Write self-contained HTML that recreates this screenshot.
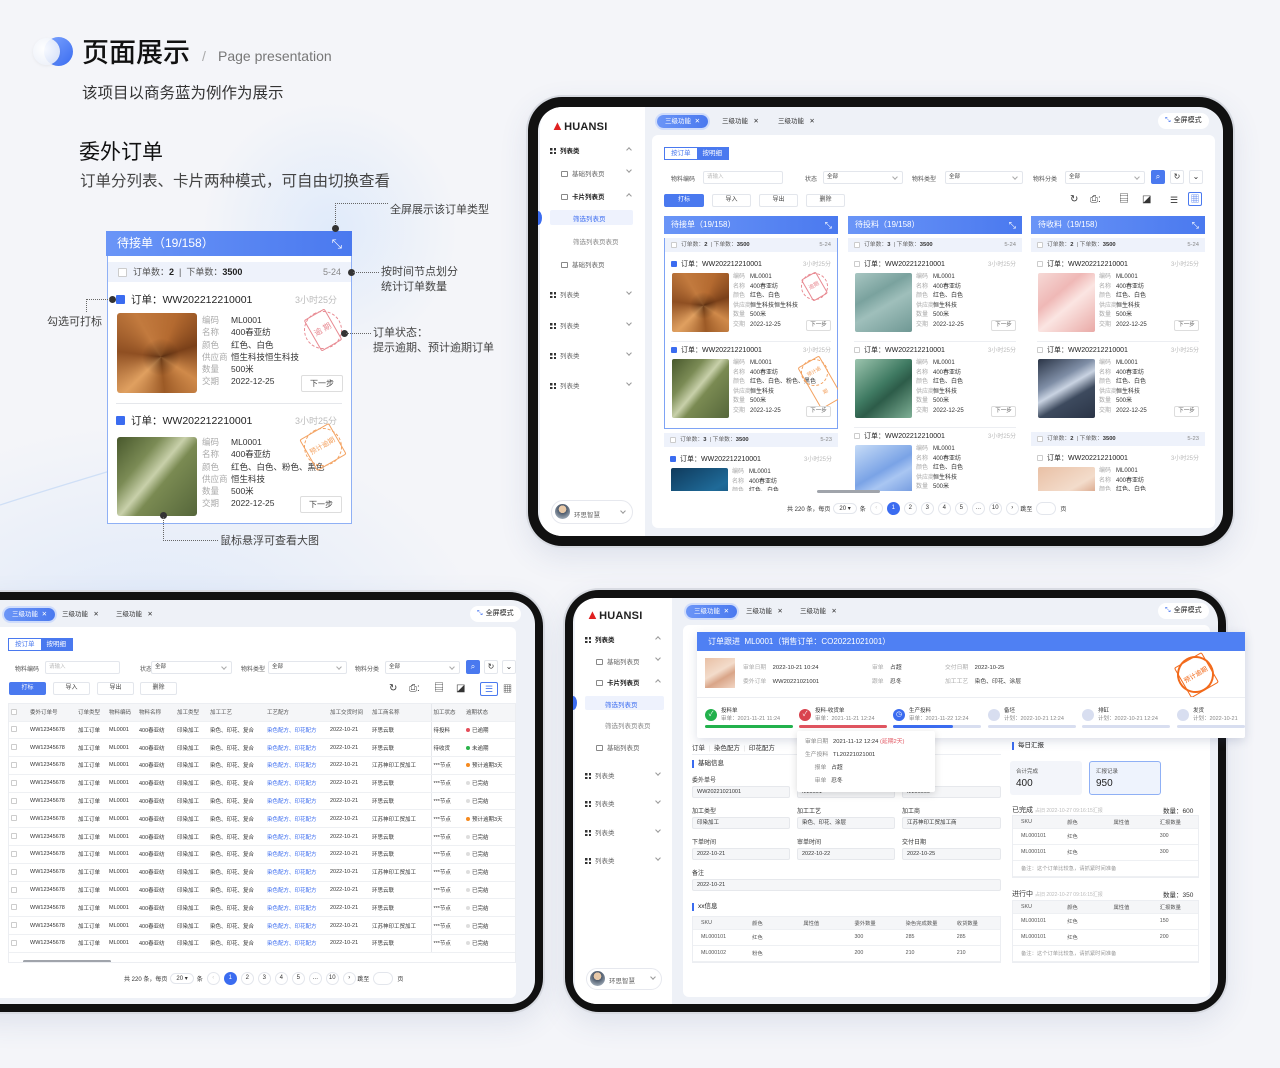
<!DOCTYPE html>
<html><head><meta charset="utf-8">
<style>
*{box-sizing:border-box;margin:0;padding:0}
body{width:1280px;height:1068px;overflow:hidden;position:relative;background:#f4f5f9;font-family:"Liberation Sans","Noto Sans CJK SC",sans-serif;color:#333}
.a{position:absolute}
.bg1{position:absolute;left:-200px;top:420px;width:700px;height:500px;border-radius:50%;background:radial-gradient(ellipse at center,rgba(200,220,250,.55),rgba(244,245,249,0) 70%)}
.bg2{position:absolute;left:200px;top:100px;width:260px;height:260px;border-radius:50%;background:radial-gradient(circle,rgba(215,230,250,.7),rgba(244,245,249,0) 70%)}
.frame{position:absolute;background:#111;box-shadow:0 0 0 2px #d8dbe2,0 10px 30px rgba(60,80,130,.12)}
.scr{position:absolute;background:#eef1f7;overflow:hidden}
.side{position:absolute;background:#fff;top:0;bottom:0}
.logo{position:absolute;font-weight:bold;font-size:11px;color:#222;letter-spacing:.2px}
.logo b{color:#e02020;font-size:13px}
.si{position:absolute;font-size:6.5px;color:#666;white-space:nowrap}
.si.h{color:#222;font-weight:bold}
.g{display:inline-block;width:6px;height:6px;vertical-align:-1px;margin-right:4px;background:linear-gradient(#333,#333) 0 0/2.5px 2.5px no-repeat,linear-gradient(#333,#333) 3.5px 0/2.5px 2.5px no-repeat,linear-gradient(#333,#333) 0 3.5px/2.5px 2.5px no-repeat,linear-gradient(#333,#333) 3.5px 3.5px/2.5px 2.5px no-repeat}
.pg{display:inline-block;width:7px;height:6px;border:1px solid #888;border-radius:1px;vertical-align:-1px;margin-right:4px}
.chev{position:absolute;width:4px;height:4px;border-right:1px solid #999;border-bottom:1px solid #999;transform:rotate(45deg)}
.chev.up{transform:rotate(-135deg)}
.tab{position:absolute;font-size:6.5px;color:#333;height:13px;line-height:13px;white-space:nowrap}
.tab.on{background:linear-gradient(90deg,#6b95f7,#4a79ef);color:#fff;border-radius:7px;padding:0 8px;box-shadow:0 0 0 2px #cfdcfb}
.fs{position:absolute;background:#fff;border-radius:9px;font-size:7px;height:16px;line-height:16px;padding:0 7px;color:#222}
.fs i{color:#3b6cf0;font-style:normal;margin-right:3px}
.panel{position:absolute;background:#fff;border-radius:6px}
.tg{position:absolute;display:flex;border:1px solid #4a79ef;font-size:6.5px;height:13px;line-height:11px}
.tg span{padding:0 6px;color:#4a79ef}
.tg span.on{background:#4a79ef;color:#fff}
.lb{position:absolute;font-size:6px;color:#555;white-space:nowrap}
.in{position:absolute;height:13px;border:1px solid #e3e6ec;border-radius:2px;font-size:5.5px;color:#bbb;line-height:11px;padding-left:3px}
.in.s{color:#444}
.in.s:after{content:"";position:absolute;right:5px;top:3px;width:3px;height:3px;border-right:1px solid #aaa;border-bottom:1px solid #aaa;transform:rotate(45deg)}
.ib{position:absolute;width:14px;height:14px;border:1px solid #e3e6ec;border-radius:2px;font-size:8px;text-align:center;line-height:12px;color:#333}
.ib.b{background:#4a79ef;border-color:#4a79ef;color:#fff}
.bt{position:absolute;height:13px;border:1px solid #e3e6ec;border-radius:2px;font-size:6px;text-align:center;line-height:11px;color:#444}
.bt.b{background:#4a79ef;border-color:#4a79ef;color:#fff}
.ico{position:absolute;font-size:10px;color:#333;line-height:10px}
.pgn{position:absolute;display:flex;align-items:center;font-size:6px;color:#333;white-space:nowrap}
.pgn .c{width:13px;height:13px;border-radius:50%;border:1px solid #e3e6ec;text-align:center;line-height:11px;margin-left:4px;background:#fff}
.pgn .c.on{background:#3b6cf0;border-color:#3b6cf0;color:#fff}
.pgn .sel{border:1px solid #e3e6ec;border-radius:7px;padding:1px 5px;margin:0 3px}
.pgn .jp{width:20px;height:13px;border:1px solid #e3e6ec;border-radius:7px;margin:0 4px}
.col{position:absolute;top:81px;width:174px;height:275px;overflow:hidden}
.ch{height:18px;background:linear-gradient(90deg,#6a95f7,#4a79ef);color:#fff;font-size:8px;line-height:18px;padding-left:7px;position:relative}
.ch:after{content:"⤡";position:absolute;right:6px;top:0;font-size:9px}
.box{margin-top:4px}
.box.sel{border:1px solid #7ea3f5;border-top:none}
.sum{height:14px;background:#eef2fb;font-size:5.8px;line-height:14px;padding:0 6px;color:#666;display:flex;align-items:center;white-space:nowrap}
.sum b{color:#333;margin-right:3px}
.sum span.r{margin-left:auto;color:#888}
.cb{display:inline-block;width:6px;height:6px;border:1px solid #ccc;border-radius:1px;margin-right:4px;vertical-align:-1px;background:#fff;flex:none}
.cb.on{background:#3b6cf0;border-color:#3b6cf0}
.ord{height:86px;position:relative;margin:0 6px;border-bottom:1px solid #eceef2}
.ord.last{border-bottom:none}
.ot{position:absolute;left:0;top:3px;font-size:7px;color:#222;line-height:12px;white-space:nowrap}
.otm{position:absolute;right:0;top:3px;font-size:6px;color:#bbb;line-height:12px}
.img{position:absolute;left:1px;top:17px;width:57px;height:59px;border-radius:2px}
.inf{position:absolute;left:62px;top:17px;font-size:6px;line-height:9.6px;white-space:nowrap}
.inf span{color:#aaa;display:inline-block;width:17px}
.nx{position:absolute;right:0;top:64px;width:25px;height:11px;border:1px solid #ddd;border-radius:2px;font-size:5.5px;text-align:center;line-height:9px;color:#555;background:#fff}
.stamp{position:absolute;border-radius:50%;border:1.5px dashed;text-align:center;transform:rotate(-30deg)}
.stamp b{display:inline-block;border:1px solid;border-radius:2px;font-weight:normal;padding:0 2px}
.red{color:#e88a92;border-color:#e88a92}
.org{color:#f3a261;border-color:#f3a261}
.f1{background:radial-gradient(circle at 55% 55%,rgba(60,30,10,.55) 0,rgba(60,30,10,0) 30%),conic-gradient(from 20deg at 55% 55%,#b46a30,#7a4019,#d08a4a,#9c5a26,#e0a060,#8f4f22,#c27a3e,#b46a30)}
.f2{background:linear-gradient(130deg,#48582c 0,#7b8b55 30%,#c8d0aa 47%,#7a8a52 58%,#55663a 100%)}
.f3{background:linear-gradient(150deg,#a8c6c2 0,#7aa29e 35%,#9fbfbb 55%,#6f9894 100%)}
.f4{background:linear-gradient(140deg,#9cc4ae 0,#3f7a62 45%,#2d5c49 60%,#7fb096 100%)}
.f5{background:linear-gradient(140deg,#f6d9d6 0,#efb8b6 35%,#fbe5e2 55%,#e9a9a6 100%)}
.f6{background:linear-gradient(150deg,#2a3446 0,#7f8ea6 35%,#c9d3e2 48%,#3d4a5e 65%,#2a3446 100%)}
.f7{background:linear-gradient(150deg,#0f3a5c,#1f6a98 50%,#0f3a5c)}
.f8{background:linear-gradient(150deg,#c7dcf7,#7aa3e6 45%,#a9c6f2 60%,#5d88d8)}
.f9{background:linear-gradient(150deg,#e9c0a5,#f3dccb 45%,#d9a588 65%,#f2d6c4)}
table{border-collapse:collapse;table-layout:fixed}
.tb td,.tb th{font-size:5.5px;white-space:nowrap;overflow:hidden;height:17.8px;border-bottom:1px solid #eef0f3;padding-left:2px;text-align:left;font-weight:normal;color:#333}
.tb th{background:#f5f6f8;height:17px;color:#555}
.tb td.bl{color:#3b6cf0}
.dot{display:inline-block;width:4px;height:4px;border-radius:50%;margin-right:2px;vertical-align:0}
.ann{position:absolute;font-size:11px;color:#444;white-space:nowrap;line-height:15px}
.dl{position:absolute;border-color:#666;border-style:dotted;border-width:0}
.dd{position:absolute;width:7px;height:7px;border-radius:50%;background:#333}
.fl{position:absolute;font-size:6px;color:#333;white-space:nowrap}
.fi{position:absolute;height:12px;background:#f5f6f8;border:1px solid #e6e8ec;border-radius:2px;font-size:5.5px;line-height:10px;padding-left:4px;color:#333}
.sec{position:absolute;font-size:6.5px;color:#222;border-left:2px solid #3b6cf0;padding-left:4px;line-height:8px}
.st{width:100%}
.st td{font-size:5.3px;color:#555;height:16px;border-bottom:1px solid #eef0f3;padding-left:8px}
.st tr:first-child td{background:#f5f6f8;height:12px}
</style></head><body>
<div class="bg1"></div><div class="bg2"></div>
<svg class="a" style="left:0;top:380px" width="360" height="160"><path d="M0 125 C40 112 80 100 120 88" stroke="#cfdff6" stroke-width="1.2" fill="none"/></svg>

<div class="a" style="left:44px;top:37px;width:29px;height:29px;border-radius:50%;background:linear-gradient(135deg,#7fa6ff,#3a6cf0)"></div>
<div class="a" style="left:33px;top:38px;width:27px;height:27px;border-radius:50%;background:radial-gradient(circle at 40% 40%,rgba(255,255,255,.95),rgba(230,236,248,.85));box-shadow:0 1px 3px rgba(0,0,0,.06)"></div>
<div class="a" style="left:82px;top:36px;font-size:27px;font-weight:500;color:#111;line-height:34px">页面展示</div>
<div class="a" style="left:202px;top:48px;font-size:14px;color:#aaa">/</div>
<div class="a" style="left:218px;top:48px;font-size:14px;color:#777">Page presentation</div>
<div class="a" style="left:82px;top:81px;font-size:15.5px;color:#333">该项目以商务蓝为例作为展示</div>
<div class="a" style="left:79px;top:136px;font-size:21px;color:#111">委外订单</div>
<div class="a" style="left:80px;top:169px;font-size:15.5px;color:#444">订单分列表、卡片两种模式，可自由切换查看</div>

<div class="a" style="left:106px;top:231px;width:246px;height:25px;background:linear-gradient(90deg,#6a95f7,#4a79ef);color:#fff;font-size:12px;line-height:25px;padding-left:11px">待接单（19/158）<span style="position:absolute;right:10px;font-size:13px">⤡</span></div>
<div class="a" style="left:107px;top:256px;width:245px;height:268px;border:1.5px solid #8fb0f5;background:#fff;border-top:none"></div>
<div class="a" style="left:108px;top:262px;width:243px;height:20px;background:#eef2fb;font-size:9px;line-height:20px;padding:0 10px;color:#555;display:flex;align-items:center;white-space:nowrap"><span class="cb" style="width:9px;height:9px;margin-right:6px"></span>订单数：<b style="color:#222">2</b>&nbsp;&nbsp;|&nbsp;&nbsp;下单数：<b style="color:#222">3500</b><span style="margin-left:auto;color:#888">5-24</span></div>
<div class="a" style="left:116px;top:292px;font-size:10.5px;color:#222;white-space:nowrap"><span class="cb on" style="width:9px;height:9px;margin-right:6px"></span>订单：WW202212210001</div>
<div class="a" style="left:295px;top:293px;font-size:9px;color:#bbb">3小时25分</div>
<div class="a f1" style="left:117px;top:313px;width:80px;height:80px;border-radius:3px"></div>
<div class="a" style="left:202px;top:314px;font-size:8.5px;line-height:12.3px;white-space:nowrap;color:#333"><span style="color:#aaa;display:inline-block;width:29px">编码</span>ML0001<br><span style="color:#aaa;display:inline-block;width:29px">名称</span>400春亚纺<br><span style="color:#aaa;display:inline-block;width:29px">颜色</span>红色、白色<br><span style="color:#aaa;display:inline-block;width:29px">供应商</span>恒生科技恒生科技<br><span style="color:#aaa;display:inline-block;width:29px">数量</span>500米<br><span style="color:#aaa;display:inline-block;width:29px">交期</span>2022-12-25</div>
<div class="stamp red" style="left:304px;top:311px;width:38px;height:38px;font-size:8px;line-height:34px"><b>逾 期</b></div>
<div class="a" style="left:301px;top:375px;width:42px;height:17px;border:1px solid #ddd;border-radius:2px;font-size:8px;text-align:center;line-height:15px;color:#444;background:#fff">下一步</div>
<div class="a" style="left:116px;top:403px;width:226px;height:1px;background:#e5e7eb"></div>
<div class="a" style="left:116px;top:413px;font-size:10.5px;color:#222;white-space:nowrap"><span class="cb on" style="width:9px;height:9px;margin-right:6px"></span>订单：WW202212210001</div>
<div class="a" style="left:295px;top:414px;font-size:9px;color:#bbb">3小时25分</div>
<div class="a f2" style="left:117px;top:437px;width:80px;height:79px;border-radius:3px"></div>
<div class="a" style="left:202px;top:436px;font-size:8.5px;line-height:12.3px;white-space:nowrap;color:#333"><span style="color:#aaa;display:inline-block;width:29px">编码</span>ML0001<br><span style="color:#aaa;display:inline-block;width:29px">名称</span>400春亚纺<br><span style="color:#aaa;display:inline-block;width:29px">颜色</span>红色、白色、粉色、黑色<br><span style="color:#aaa;display:inline-block;width:29px">供应商</span>恒生科技<br><span style="color:#aaa;display:inline-block;width:29px">数量</span>500米<br><span style="color:#aaa;display:inline-block;width:29px">交期</span>2022-12-25</div>
<div class="stamp org" style="left:304px;top:428px;width:38px;height:38px;font-size:7px;line-height:34px"><b>预计逾期</b></div>
<div class="a" style="left:300px;top:496px;width:42px;height:17px;border:1px solid #ddd;border-radius:2px;font-size:8px;text-align:center;line-height:15px;color:#444;background:#fff">下一步</div>

<div class="dl" style="left:335px;top:203px;width:53px;height:25px;border-top-width:1px;border-left-width:1px"></div>
<div class="dd" style="left:332px;top:225px"></div>
<div class="ann" style="left:390px;top:203px">全屏展示该订单类型</div>
<div class="dd" style="left:348px;top:269px"></div>
<div class="dl" style="left:353px;top:272px;width:26px;border-top-width:1px"></div>
<div class="ann" style="left:381px;top:265px">按时间节点划分<br>统计订单数量</div>
<div class="dd" style="left:109px;top:296px"></div>
<div class="dl" style="left:86px;top:299px;width:24px;height:13px;border-top-width:1px;border-left-width:1px"></div>
<div class="ann" style="left:47px;top:315px">勾选可打标</div>
<div class="dd" style="left:341px;top:330px"></div>
<div class="dl" style="left:346px;top:333px;width:25px;border-top-width:1px"></div>
<div class="ann" style="left:373px;top:326px">订单状态：<br>提示逾期、预计逾期订单</div>
<div class="dd" style="left:160px;top:512px"></div>
<div class="dl" style="left:163px;top:517px;width:55px;height:24px;border-bottom-width:1px;border-left-width:1px"></div>
<div class="ann" style="left:220px;top:534px">鼠标悬浮可查看大图</div>

<!-- Tablet 1 -->
<div class="frame" style="left:528px;top:97px;width:705px;height:449px;border-radius:34px"></div>
<div class="scr" style="left:538px;top:107px;width:685px;height:429px;border-radius:24px">
 <div class="side" style="left:2px;width:105px;border-radius:20px 0 0 20px"></div>
 <div class="logo" style="left:13px;top:11px"><b>▲</b>HUANSI</div>
 <div class="si h" style="left:12px;top:38px"><span class="g"></span>列表类</div><div class="chev up" style="left:89px;top:41px"></div>
 <div class="si" style="left:23px;top:61px"><span class="pg"></span>基础列表页</div><div class="chev" style="left:89px;top:61px"></div>
 <div class="si h" style="left:23px;top:84px"><span class="pg"></span>卡片列表页</div><div class="chev up" style="left:89px;top:87px"></div>
 <div class="a" style="left:12px;top:103px;width:83px;height:15px;background:#eef2fd;border-radius:2px"></div>
 <div class="a" style="left:-4px;top:104px;width:8px;height:14px;border-radius:50%;background:#3b6cf0"></div>
 <div class="si" style="left:35px;top:106px;color:#3b6cf0">筛选列表页</div>
 <div class="si" style="left:35px;top:129px;color:#888">筛选列表页表页</div>
 <div class="si" style="left:23px;top:152px"><span class="pg"></span>基础列表页</div>
 <div class="si" style="left:12px;top:182px"><span class="g"></span>列表类</div><div class="chev" style="left:89px;top:183px"></div>
 <div class="si" style="left:12px;top:213px"><span class="g"></span>列表类</div><div class="chev" style="left:89px;top:214px"></div>
 <div class="si" style="left:12px;top:243px"><span class="g"></span>列表类</div><div class="chev" style="left:89px;top:244px"></div>
 <div class="si" style="left:12px;top:273px"><span class="g"></span>列表类</div><div class="chev" style="left:89px;top:274px"></div>
 <div class="a" style="left:13px;top:393px;width:82px;height:24px;border:1px solid #e6e8ee;border-radius:12px;background:#fff"></div>
 <div class="a" style="left:17px;top:397px;width:15px;height:15px;border-radius:50%;background:radial-gradient(circle at 50% 35%,#e8c9a8 30%,#4d5a6b 32%,#c0ccd8)"></div>
 <div class="si" style="left:36px;top:402px">环思智慧</div><div class="chev" style="left:83px;top:402px"></div>
 <div class="tab on" style="left:119px;top:8px">三级功能 &nbsp;✕</div>
 <div class="tab" style="left:184px;top:8px">三级功能 &nbsp;&nbsp;✕</div>
 <div class="tab" style="left:240px;top:8px">三级功能 &nbsp;&nbsp;✕</div>
 <div class="fs" style="left:620px;top:6px"><i>⤡</i>全屏模式</div>
 <div class="panel" style="left:114px;top:28px;width:563px;height:393px">
  <div class="tg" style="left:12px;top:12px"><span>按订单</span><span class="on">按明细</span></div>
  <div class="lb" style="left:19px;top:39px">物料编码</div><div class="in" style="left:51px;top:36px;width:80px">请输入</div>
  <div class="lb" style="left:153px;top:39px">状态</div><div class="in s" style="left:171px;top:36px;width:80px">全部</div>
  <div class="lb" style="left:260px;top:39px">物料类型</div><div class="in s" style="left:293px;top:36px;width:78px">全部</div>
  <div class="lb" style="left:381px;top:39px">物料分类</div><div class="in s" style="left:413px;top:36px;width:80px">全部</div>
  <div class="ib b" style="left:499px;top:35px">⌕</div><div class="ib" style="left:518px;top:35px">↻</div><div class="ib" style="left:537px;top:35px">⌄</div>
  <div class="bt b" style="left:12px;top:59px;width:40px">打标</div>
  <div class="bt" style="left:60px;top:59px;width:39px">导入</div>
  <div class="bt" style="left:107px;top:59px;width:39px">导出</div>
  <div class="bt" style="left:154px;top:59px;width:39px">删除</div>
  <div class="ico" style="left:418px;top:60px">↻</div>
  <div class="ico" style="left:438px;top:60px">⎙:</div>
  <div class="ico" style="left:467px;top:60px">▤</div>
  <div class="ico" style="left:490px;top:60px">◪</div>
  <div class="ico" style="left:518px;top:60px;font-size:9px">☰</div>
  <div class="ib" style="left:536px;top:57px;border-color:#4a79ef;color:#4a79ef;font-size:9px">▦</div>
  <div class="col" style="left:12px">
   <div class="ch">待接单（19/158）</div>
   <div class="box sel">
    <div class="sum"><span class="cb"></span>订单数：<b>2</b>|&nbsp;下单数：<b>3500</b><span class="r">5-24</span></div>
    <div style="height:4px"></div>
    <div class="ord"><div class="ot"><span class="cb on"></span>订单：WW202212210001</div><div class="otm">3小时25分</div><div class="img f1"></div>
     <div class="inf"><span>编码</span>ML0001<br><span>名称</span>400春亚纺<br><span>颜色</span>红色、白色<br><span>供应商</span>恒生科技恒生科技<br><span>数量</span>500米<br><span>交期</span>2022-12-25</div>
     <div class="stamp red" style="right:3px;top:17px;width:27px;height:27px;font-size:5.5px;line-height:23px"><b>逾期</b></div><div class="nx">下一步</div></div>
    <div class="ord last"><div class="ot"><span class="cb on"></span>订单：WW202212210001</div><div class="otm">3小时25分</div><div class="img f2"></div>
     <div class="inf"><span>编码</span>ML0001<br><span>名称</span>400春亚纺<br><span>颜色</span>红色、白色、粉色、黑色<br><span>供应商</span>恒生科技<br><span>数量</span>500米<br><span>交期</span>2022-12-25</div>
     <div class="stamp org" style="right:3px;top:17px;width:27px;height:27px;font-size:5px;line-height:23px"><b>预计逾期</b></div><div class="nx">下一步</div></div>
   </div>
   <div class="box"><div class="sum"><span class="cb"></span>订单数：<b>3</b>|&nbsp;下单数：<b>3500</b><span class="r">5-23</span></div><div style="height:4px"></div>
    <div class="ord"><div class="ot"><span class="cb on"></span>订单：WW202212210001</div><div class="otm">3小时25分</div><div class="img f7"></div>
     <div class="inf"><span>编码</span>ML0001<br><span>名称</span>400春亚纺<br><span>颜色</span>红色、白色</div></div></div>
  </div>
  <div class="col" style="left:196px">
   <div class="ch">待投料（19/158）</div>
   <div class="box">
    <div class="sum"><span class="cb"></span>订单数：<b>3</b>|&nbsp;下单数：<b>3500</b><span class="r">5-24</span></div>
    <div style="height:4px"></div>
    <div class="ord"><div class="ot"><span class="cb"></span>订单：WW202212210001</div><div class="otm">3小时25分</div><div class="img f3"></div>
     <div class="inf"><span>编码</span>ML0001<br><span>名称</span>400春亚纺<br><span>颜色</span>红色、白色<br><span>供应商</span>恒生科技<br><span>数量</span>500米<br><span>交期</span>2022-12-25</div><div class="nx">下一步</div></div>
    <div class="ord"><div class="ot"><span class="cb"></span>订单：WW202212210001</div><div class="otm">3小时25分</div><div class="img f4"></div>
     <div class="inf"><span>编码</span>ML0001<br><span>名称</span>400春亚纺<br><span>颜色</span>红色、白色<br><span>供应商</span>恒生科技<br><span>数量</span>500米<br><span>交期</span>2022-12-25</div><div class="nx">下一步</div></div>
    <div class="ord"><div class="ot"><span class="cb"></span>订单：WW202212210001</div><div class="otm">3小时25分</div><div class="img f8"></div>
     <div class="inf"><span>编码</span>ML0001<br><span>名称</span>400春亚纺<br><span>颜色</span>红色、白色<br><span>供应商</span>恒生科技<br><span>数量</span>500米</div></div>
   </div>
  </div>
  <div class="col" style="left:379px">
   <div class="ch">待收料（19/158）</div>
   <div class="box">
    <div class="sum"><span class="cb"></span>订单数：<b>2</b>|&nbsp;下单数：<b>3500</b><span class="r">5-24</span></div>
    <div style="height:4px"></div>
    <div class="ord"><div class="ot"><span class="cb"></span>订单：WW202212210001</div><div class="otm">3小时25分</div><div class="img f5"></div>
     <div class="inf"><span>编码</span>ML0001<br><span>名称</span>400春亚纺<br><span>颜色</span>红色、白色<br><span>供应商</span>恒生科技<br><span>数量</span>500米<br><span>交期</span>2022-12-25</div><div class="nx">下一步</div></div>
    <div class="ord last"><div class="ot"><span class="cb"></span>订单：WW202212210001</div><div class="otm">3小时25分</div><div class="img f6"></div>
     <div class="inf"><span>编码</span>ML0001<br><span>名称</span>400春亚纺<br><span>颜色</span>红色、白色<br><span>供应商</span>恒生科技<br><span>数量</span>500米<br><span>交期</span>2022-12-25</div><div class="nx">下一步</div></div>
   </div>
   <div class="box"><div class="sum"><span class="cb"></span>订单数：<b>2</b>|&nbsp;下单数：<b>3500</b><span class="r">5-23</span></div><div style="height:4px"></div>
    <div class="ord"><div class="ot"><span class="cb"></span>订单：WW202212210001</div><div class="otm">3小时25分</div><div class="img f9"></div>
     <div class="inf"><span>编码</span>ML0001<br><span>名称</span>400春亚纺<br><span>颜色</span>红色、白色</div></div></div>
  </div>
  <div class="a" style="left:165px;top:355px;width:63px;height:3px;background:#a0a4ab;border-radius:2px"></div>
  <div class="pgn" style="left:135px;top:367px">共 220 条，每页<span class="sel">20 ▾</span>条<span class="c" style="color:#ccc">‹</span><span class="c on">1</span><span class="c">2</span><span class="c">3</span><span class="c">4</span><span class="c">5</span><span class="c">…</span><span class="c">10</span><span class="c">›</span>&nbsp;跳至<span class="jp"></span>页</div>
 </div>
</div>

<!-- Tablet 2 -->
<div class="frame" style="left:-40px;top:592px;width:583px;height:420px;border-radius:34px"></div>
<div class="scr" style="left:0;top:600px;width:535px;height:404px;border-radius:0 24px 24px 0">
 <div class="tab on" style="left:4px;top:8px">三级功能 &nbsp;✕</div>
 <div class="tab" style="left:62px;top:8px">三级功能 &nbsp;&nbsp;✕</div>
 <div class="tab" style="left:116px;top:8px">三级功能 &nbsp;&nbsp;✕</div>
 <div class="fs" style="left:470px;top:6px"><i>⤡</i>全屏模式</div>
 <div class="panel" style="left:0;top:27px;width:516px;height:371px;border-radius:0 6px 6px 0">
  <div class="tg" style="left:8px;top:11px"><span>按订单</span><span class="on">按明细</span></div>
  <div class="lb" style="left:15px;top:37px">物料编码</div><div class="in" style="left:45px;top:34px;width:75px">请输入</div>
  <div class="lb" style="left:140px;top:37px">状态</div><div class="in s" style="left:151px;top:34px;width:81px">全部</div>
  <div class="lb" style="left:241px;top:37px">物料类型</div><div class="in s" style="left:268px;top:34px;width:79px">全部</div>
  <div class="lb" style="left:355px;top:37px">物料分类</div><div class="in s" style="left:385px;top:34px;width:75px">全部</div>
  <div class="ib b" style="left:466px;top:33px">⌕</div><div class="ib" style="left:484px;top:33px">↻</div><div class="ib" style="left:502px;top:33px">⌄</div>
  <div class="bt b" style="left:9px;top:55px;width:37px">打标</div>
  <div class="bt" style="left:53px;top:55px;width:37px">导入</div>
  <div class="bt" style="left:97px;top:55px;width:37px">导出</div>
  <div class="bt" style="left:140px;top:55px;width:37px">删除</div>
  <div class="ico" style="left:389px;top:57px">↻</div>
  <div class="ico" style="left:409px;top:57px">⎙:</div>
  <div class="ico" style="left:434px;top:57px">▤</div>
  <div class="ico" style="left:456px;top:57px">◪</div>
  <div class="ib" style="left:480px;top:55px;border-color:#4a79ef;color:#4a79ef;font-size:9px;width:18px">☰</div>
  <div class="ico" style="left:503px;top:57px;font-size:9px">▦</div>
  <div class="a" style="left:8px;top:76px;width:508px;height:260px;border:1px solid #eceef2;overflow:hidden">
  <table class="tb" style="width:508px">
   <colgroup><col style="width:19px"><col style="width:48px"><col style="width:31px"><col style="width:30px"><col style="width:38px"><col style="width:33px"><col style="width:57px"><col style="width:63px"><col style="width:42px"><col style="width:61px"><col style="width:33px"><col style="width:53px"></colgroup>
   <tr><th><span class="cb"></span></th><th>委外订单号</th><th>订单类型</th><th>物料编码</th><th>物料名称</th><th>加工类型</th><th>加工工艺</th><th>工艺配方</th><th>加工交货时间</th><th>加工商名称</th><th style="border-left:1px solid #e6e8ec">加工状态</th><th>逾期状态</th></tr>
   <tr><td><span class="cb"></span></td><td>WW12345678</td><td>加工订单</td><td>ML0001</td><td>400春亚纺</td><td>印染加工</td><td>染色、印花、复合</td><td class="bl">染色配方、印花配方</td><td>2022-10-21</td><td>环思云联</td><td style="border-left:1px solid #e6e8ec">待投料</td><td><span class="dot" style="background:#e54d5a"></span>已逾期</td></tr>
   <tr><td><span class="cb"></span></td><td>WW12345678</td><td>加工订单</td><td>ML0001</td><td>400春亚纺</td><td>印染加工</td><td>染色、印花、复合</td><td class="bl">染色配方、印花配方</td><td>2022-10-21</td><td>环思云联</td><td style="border-left:1px solid #e6e8ec">待收货</td><td><span class="dot" style="background:#2bb34a"></span>未逾期</td></tr>
   <tr><td><span class="cb"></span></td><td>WW12345678</td><td>加工订单</td><td>ML0001</td><td>400春亚纺</td><td>印染加工</td><td>染色、印花、复合</td><td class="bl">染色配方、印花配方</td><td>2022-10-21</td><td>江苏神印工贸加工</td><td style="border-left:1px solid #e6e8ec">***节点</td><td><span class="dot" style="background:#f58a1f"></span>预计逾期3天</td></tr>
   <tr><td><span class="cb"></span></td><td>WW12345678</td><td>加工订单</td><td>ML0001</td><td>400春亚纺</td><td>印染加工</td><td>染色、印花、复合</td><td class="bl">染色配方、印花配方</td><td>2022-10-21</td><td>环思云联</td><td style="border-left:1px solid #e6e8ec">***节点</td><td><span class="dot" style="background:#ddd"></span>已完结</td></tr>
   <tr><td><span class="cb"></span></td><td>WW12345678</td><td>加工订单</td><td>ML0001</td><td>400春亚纺</td><td>印染加工</td><td>染色、印花、复合</td><td class="bl">染色配方、印花配方</td><td>2022-10-21</td><td>环思云联</td><td style="border-left:1px solid #e6e8ec">***节点</td><td><span class="dot" style="background:#ddd"></span>已完结</td></tr>
   <tr><td><span class="cb"></span></td><td>WW12345678</td><td>加工订单</td><td>ML0001</td><td>400春亚纺</td><td>印染加工</td><td>染色、印花、复合</td><td class="bl">染色配方、印花配方</td><td>2022-10-21</td><td>江苏神印工贸加工</td><td style="border-left:1px solid #e6e8ec">***节点</td><td><span class="dot" style="background:#f58a1f"></span>预计逾期3天</td></tr>
   <tr><td><span class="cb"></span></td><td>WW12345678</td><td>加工订单</td><td>ML0001</td><td>400春亚纺</td><td>印染加工</td><td>染色、印花、复合</td><td class="bl">染色配方、印花配方</td><td>2022-10-21</td><td>环思云联</td><td style="border-left:1px solid #e6e8ec">***节点</td><td><span class="dot" style="background:#ddd"></span>已完结</td></tr>
   <tr><td><span class="cb"></span></td><td>WW12345678</td><td>加工订单</td><td>ML0001</td><td>400春亚纺</td><td>印染加工</td><td>染色、印花、复合</td><td class="bl">染色配方、印花配方</td><td>2022-10-21</td><td>环思云联</td><td style="border-left:1px solid #e6e8ec">***节点</td><td><span class="dot" style="background:#ddd"></span>已完结</td></tr>
   <tr><td><span class="cb"></span></td><td>WW12345678</td><td>加工订单</td><td>ML0001</td><td>400春亚纺</td><td>印染加工</td><td>染色、印花、复合</td><td class="bl">染色配方、印花配方</td><td>2022-10-21</td><td>江苏神印工贸加工</td><td style="border-left:1px solid #e6e8ec">***节点</td><td><span class="dot" style="background:#ddd"></span>已完结</td></tr>
   <tr><td><span class="cb"></span></td><td>WW12345678</td><td>加工订单</td><td>ML0001</td><td>400春亚纺</td><td>印染加工</td><td>染色、印花、复合</td><td class="bl">染色配方、印花配方</td><td>2022-10-21</td><td>环思云联</td><td style="border-left:1px solid #e6e8ec">***节点</td><td><span class="dot" style="background:#ddd"></span>已完结</td></tr>
   <tr><td><span class="cb"></span></td><td>WW12345678</td><td>加工订单</td><td>ML0001</td><td>400春亚纺</td><td>印染加工</td><td>染色、印花、复合</td><td class="bl">染色配方、印花配方</td><td>2022-10-21</td><td>环思云联</td><td style="border-left:1px solid #e6e8ec">***节点</td><td><span class="dot" style="background:#ddd"></span>已完结</td></tr>
   <tr><td><span class="cb"></span></td><td>WW12345678</td><td>加工订单</td><td>ML0001</td><td>400春亚纺</td><td>印染加工</td><td>染色、印花、复合</td><td class="bl">染色配方、印花配方</td><td>2022-10-21</td><td>江苏神印工贸加工</td><td style="border-left:1px solid #e6e8ec">***节点</td><td><span class="dot" style="background:#ddd"></span>已完结</td></tr>
   <tr><td><span class="cb"></span></td><td>WW12345678</td><td>加工订单</td><td>ML0001</td><td>400春亚纺</td><td>印染加工</td><td>染色、印花、复合</td><td class="bl">染色配方、印花配方</td><td>2022-10-21</td><td>环思云联</td><td style="border-left:1px solid #e6e8ec">***节点</td><td><span class="dot" style="background:#ddd"></span>已完结</td></tr>
  </table>
  <div class="a" style="left:14px;top:256px;width:88px;height:3px;background:#a0a4ab;border-radius:2px"></div>
  </div>
  <div class="pgn" style="left:124px;top:345px">共 220 条，每页<span class="sel">20 ▾</span>条<span class="c" style="color:#ccc">‹</span><span class="c on">1</span><span class="c">2</span><span class="c">3</span><span class="c">4</span><span class="c">5</span><span class="c">…</span><span class="c">10</span><span class="c">›</span>&nbsp;跳至<span class="jp"></span>页</div>
 </div>
</div>

<!-- Tablet 3 -->
<div class="frame" style="left:565px;top:590px;width:661px;height:422px;border-radius:34px"></div>
<div class="scr" style="left:573px;top:598px;width:645px;height:406px;border-radius:24px">
 <div class="side" style="left:2px;width:97px;border-radius:20px 0 0 20px"></div>
 <div class="logo" style="left:13px;top:9px"><b>▲</b>HUANSI</div>
 <div class="si h" style="left:12px;top:36px"><span class="g"></span>列表类</div><div class="chev up" style="left:83px;top:39px"></div>
 <div class="si" style="left:23px;top:58px"><span class="pg"></span>基础列表页</div><div class="chev" style="left:83px;top:58px"></div>
 <div class="si h" style="left:23px;top:79px"><span class="pg"></span>卡片列表页</div><div class="chev up" style="left:83px;top:82px"></div>
 <div class="a" style="left:12px;top:98px;width:79px;height:14px;background:#eef2fd;border-radius:2px"></div>
 <div class="a" style="left:-4px;top:98px;width:8px;height:14px;border-radius:50%;background:#3b6cf0"></div>
 <div class="si" style="left:32px;top:101px;color:#3b6cf0">筛选列表页</div>
 <div class="si" style="left:32px;top:122px;color:#888">筛选列表页表页</div>
 <div class="si" style="left:23px;top:144px"><span class="pg"></span>基础列表页</div>
 <div class="si" style="left:12px;top:172px"><span class="g"></span>列表类</div><div class="chev" style="left:83px;top:173px"></div>
 <div class="si" style="left:12px;top:200px"><span class="g"></span>列表类</div><div class="chev" style="left:83px;top:201px"></div>
 <div class="si" style="left:12px;top:229px"><span class="g"></span>列表类</div><div class="chev" style="left:83px;top:230px"></div>
 <div class="si" style="left:12px;top:257px"><span class="g"></span>列表类</div><div class="chev" style="left:83px;top:258px"></div>
 <div class="a" style="left:13px;top:370px;width:76px;height:22px;border:1px solid #e6e8ee;border-radius:11px;background:#fff"></div>
 <div class="a" style="left:17px;top:373px;width:15px;height:15px;border-radius:50%;background:radial-gradient(circle at 50% 35%,#e8c9a8 30%,#4d5a6b 32%,#c0ccd8)"></div>
 <div class="si" style="left:36px;top:377px">环思智慧</div><div class="chev" style="left:78px;top:377px"></div>
 <div class="tab on" style="left:113px;top:7px">三级功能 &nbsp;✕</div>
 <div class="tab" style="left:173px;top:7px">三级功能 &nbsp;&nbsp;✕</div>
 <div class="tab" style="left:227px;top:7px">三级功能 &nbsp;&nbsp;✕</div>
 <div class="fs" style="left:585px;top:5px"><i>⤡</i>全屏模式</div>
 <div class="panel" style="left:110px;top:27px;width:527px;height:372px">
  <div class="fl" style="left:9px;top:117px;font-size:6.5px">订单 &nbsp;<span style="color:#ddd">|</span>&nbsp; 染色配方 &nbsp;<span style="color:#ddd">|</span>&nbsp; 印花配方</div>
  <div class="a" style="left:9px;top:129px;width:309px;height:1px;background:#eceef2"></div>
  <div class="sec" style="left:9px;top:135px">基础信息</div>
  <div class="fl" style="left:9px;top:150px">委外单号</div><div class="fl" style="left:114px;top:150px">物料编码</div><div class="fl" style="left:219px;top:150px">物料名称</div>
  <div class="fi" style="left:9px;top:161px;width:98px">WW20221021001</div><div class="fi" style="left:114px;top:161px;width:98px">ML0001</div><div class="fi" style="left:219px;top:161px;width:99px">ML00000</div>
  <div class="fl" style="left:9px;top:181px">加工类型</div><div class="fl" style="left:114px;top:181px">加工工艺</div><div class="fl" style="left:219px;top:181px">加工商</div>
  <div class="fi" style="left:9px;top:192px;width:98px">印染加工</div><div class="fi" style="left:114px;top:192px;width:98px">染色、印花、涂层</div><div class="fi" style="left:219px;top:192px;width:99px">江苏神印工贸加工商</div>
  <div class="fl" style="left:9px;top:212px">下单时间</div><div class="fl" style="left:114px;top:212px">审单时间</div><div class="fl" style="left:219px;top:212px">交付日期</div>
  <div class="fi" style="left:9px;top:223px;width:98px">2022-10-21</div><div class="fi" style="left:114px;top:223px;width:98px">2022-10-22</div><div class="fi" style="left:219px;top:223px;width:99px">2022-10-25</div>
  <div class="fl" style="left:9px;top:243px">备注</div>
  <div class="fi" style="left:9px;top:254px;width:309px">2022-10-21</div>
  <div class="sec" style="left:9px;top:278px">xx信息</div>
  <div class="a" style="left:9px;top:291px;width:309px;border:1px solid #eceef2">
   <table class="st"><tr><td>SKU</td><td>颜色</td><td>属性值</td><td>委外数量</td><td>染色完成数量</td><td>收货数量</td></tr>
   <tr><td>ML000101</td><td>红色</td><td></td><td>300</td><td>285</td><td>285</td></tr>
   <tr><td>ML000102</td><td>粉色</td><td></td><td>200</td><td>210</td><td>210</td></tr></table></div>
  <div class="sec" style="left:329px;top:117px">每日汇报</div>
  <div class="a" style="left:327px;top:136px;width:72px;height:34px;background:#f3f5fa;border-radius:3px;padding:6px 6px;font-size:5.5px;color:#555">合计完成<div style="font-size:10px;color:#222;margin-top:3px">400</div></div>
  <div class="a" style="left:406px;top:136px;width:72px;height:34px;background:#eef3fd;border:1px solid #8fb0f5;border-radius:3px;padding:5px 6px;font-size:5.5px;color:#555">汇报记录<div style="font-size:10px;color:#222;margin-top:3px">950</div></div>
  <div class="fl" style="left:329px;top:180px;font-size:7px">已完成 <span style="font-size:5px;color:#bbb">占旧 2022-10-27 09:16:15汇报</span></div><div class="fl" style="left:480px;top:180px;font-size:6.5px">数量：600</div>
  <div class="a" style="left:329px;top:190px;width:187px;border:1px solid #eceef2">
   <table class="st"><tr><td>SKU</td><td>颜色</td><td>属性值</td><td>汇报数量</td></tr>
   <tr><td>ML000101</td><td>红色</td><td></td><td>300</td></tr>
   <tr><td>ML000101</td><td>红色</td><td></td><td>300</td></tr>
   <tr><td colspan="4" style="color:#999">备注：这个订单比较急，请抓紧时间准备</td></tr></table></div>
  <div class="fl" style="left:329px;top:264px;font-size:7px">进行中 <span style="font-size:5px;color:#bbb">占旧 2022-10-27 09:16:15汇报</span></div><div class="fl" style="left:480px;top:264px;font-size:6.5px">数量：350</div>
  <div class="a" style="left:329px;top:275px;width:187px;border:1px solid #eceef2">
   <table class="st"><tr><td>SKU</td><td>颜色</td><td>属性值</td><td>汇报数量</td></tr>
   <tr><td>ML000101</td><td>红色</td><td></td><td>150</td></tr>
   <tr><td>ML000101</td><td>红色</td><td></td><td>200</td></tr>
   <tr><td colspan="4" style="color:#999">备注：这个订单比较急，请抓紧时间准备</td></tr></table></div>
 </div>
</div>
<div class="a" style="left:697px;top:632px;width:548px;height:106px;background:#fff;box-shadow:0 3px 10px rgba(60,80,130,.18);border-radius:2px"></div>
<div class="a" style="left:697px;top:632px;width:548px;height:19px;background:#4f80f3;color:#fff;font-size:8px;line-height:19px;padding-left:11px">订单跟进 &nbsp;ML0001（销售订单：CO20221021001）</div>
<div class="a f9" style="left:705px;top:658px;width:30px;height:30px"></div>
<div class="a" style="left:743px;top:661px;font-size:5.8px;line-height:14px;color:#333;white-space:nowrap"><span style="color:#aaa">审单日期</span>&nbsp;&nbsp;&nbsp;&nbsp;2022-10-21 10:24<br><span style="color:#aaa">委外订单</span>&nbsp;&nbsp;&nbsp;&nbsp;WW20221021001</div>
<div class="a" style="left:872px;top:661px;font-size:5.8px;line-height:14px;color:#333;white-space:nowrap"><span style="color:#aaa">审单</span>&nbsp;&nbsp;&nbsp;&nbsp;占超<br><span style="color:#aaa">跟单</span>&nbsp;&nbsp;&nbsp;&nbsp;忍冬</div>
<div class="a" style="left:945px;top:661px;font-size:5.8px;line-height:14px;color:#333;white-space:nowrap"><span style="color:#aaa">交付日期</span>&nbsp;&nbsp;&nbsp;&nbsp;2022-10-25<br><span style="color:#aaa">加工工艺</span>&nbsp;&nbsp;&nbsp;&nbsp;染色、印花、涂层</div>
<div class="stamp org" style="left:1177px;top:656px;width:37px;height:37px;border-style:solid;border-width:2px;font-size:6.5px;line-height:33px;color:#f26a1b;border-color:#f26a1b"><b>预计逾期</b></div>
<div class="a" style="left:697px;top:697px;width:548px;height:1px;background:#eceef2"></div>
<div class="a" style="left:705px;top:709px;width:12px;height:12px;border-radius:50%;background:#22b14c;color:#fff;font-size:7px;text-align:center;line-height:12px">✓</div>
<div class="a" style="left:799px;top:709px;width:12px;height:12px;border-radius:50%;background:#d9434e;color:#fff;font-size:7px;text-align:center;line-height:12px">✓</div>
<div class="a" style="left:893px;top:709px;width:12px;height:12px;border-radius:50%;background:#3b6cf0;color:#fff;font-size:7px;text-align:center;line-height:12px">◷</div>
<div class="a" style="left:988px;top:709px;width:12px;height:12px;border-radius:50%;background:#d8def0"></div>
<div class="a" style="left:1082px;top:709px;width:12px;height:12px;border-radius:50%;background:#d8def0"></div>
<div class="a" style="left:1177px;top:709px;width:12px;height:12px;border-radius:50%;background:#d8def0"></div>
<div class="a" style="left:721px;top:707px;font-size:5.5px;line-height:8px;white-space:nowrap">投料单<br><span style="color:#888">审单：2021-11-21 11:24</span></div>
<div class="a" style="left:815px;top:707px;font-size:5.5px;line-height:8px;white-space:nowrap">投料-收货单<br><span style="color:#888">审单：2021-11-21 12:24</span></div>
<div class="a" style="left:909px;top:707px;font-size:5.5px;line-height:8px;white-space:nowrap">生产投料<br><span style="color:#888">审单：2021-11-22 12:24</span></div>
<div class="a" style="left:1004px;top:707px;font-size:5.5px;line-height:8px;white-space:nowrap">备坯<br><span style="color:#888">计划：2022-10-21 12:24</span></div>
<div class="a" style="left:1098px;top:707px;font-size:5.5px;line-height:8px;white-space:nowrap">排缸<br><span style="color:#888">计划：2022-10-21 12:24</span></div>
<div class="a" style="left:1193px;top:707px;font-size:5.5px;line-height:8px;white-space:nowrap">发货<br><span style="color:#888">计划：2022-10-21</span></div>
<div class="a" style="left:705px;top:725px;width:88px;height:3px;background:#22b14c;border-radius:2px"></div>
<div class="a" style="left:799px;top:725px;width:88px;height:3px;background:#e05560;border-radius:2px"></div>
<div class="a" style="left:893px;top:725px;width:88px;height:3px;background:#d8def0;border-radius:2px"></div>
<div class="a" style="left:893px;top:725px;width:60px;height:3px;background:#3b6cf0;border-radius:2px"></div>
<div class="a" style="left:988px;top:725px;width:88px;height:3px;background:#d8def0;border-radius:2px"></div>
<div class="a" style="left:1082px;top:725px;width:88px;height:3px;background:#d8def0;border-radius:2px"></div>
<div class="a" style="left:1177px;top:725px;width:68px;height:3px;background:#d8def0;border-radius:2px"></div>
<div class="a" style="left:797px;top:731px;width:138px;height:61px;background:#fff;box-shadow:0 2px 8px rgba(0,0,0,.15);border-radius:2px;padding:5px 8px;font-size:5.8px;line-height:13px;white-space:nowrap;color:#333"><span style="color:#888">审单日期</span>&nbsp;&nbsp;&nbsp;2021-11-12 12:24 <span style="color:#e05560">(延期2天)</span><br><span style="color:#888">生产投料</span>&nbsp;&nbsp;&nbsp;TL20221021001<br>&nbsp;&nbsp;&nbsp;&nbsp;&nbsp;&nbsp;<span style="color:#888">报单</span>&nbsp;&nbsp;&nbsp;占超<br>&nbsp;&nbsp;&nbsp;&nbsp;&nbsp;&nbsp;<span style="color:#888">审单</span>&nbsp;&nbsp;&nbsp;忍冬</div>
</body></html>
